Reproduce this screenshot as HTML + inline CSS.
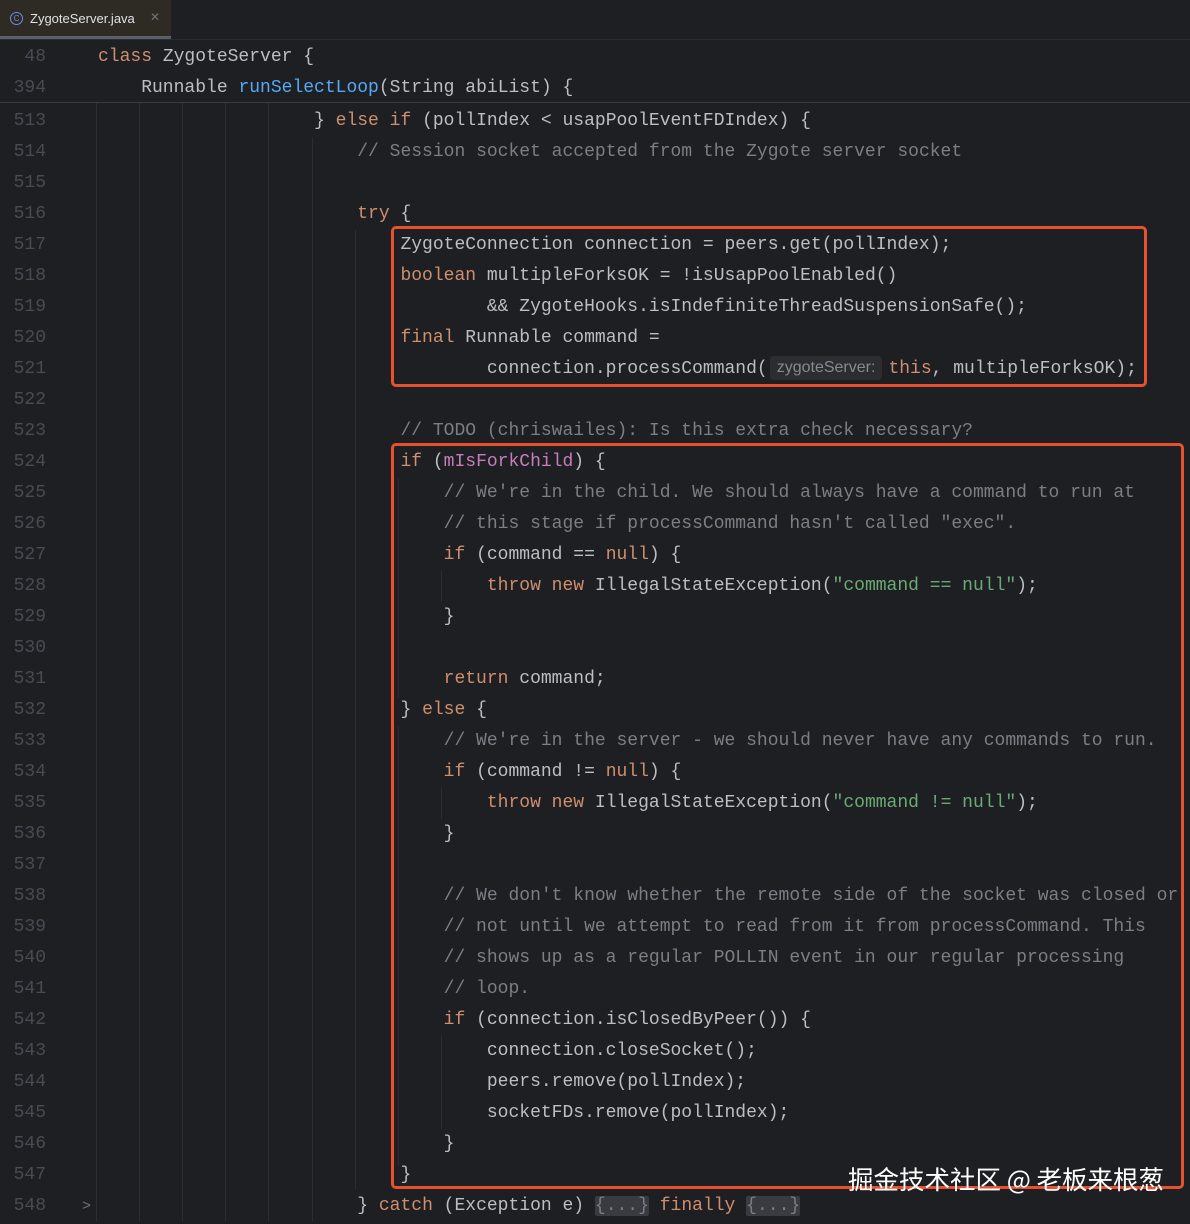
<!DOCTYPE html>
<html><head><meta charset="utf-8"><style>
html,body{margin:0;padding:0}
body{width:1190px;height:1222px;background:#1e1f22;position:relative;overflow:hidden;font-family:"Liberation Mono",monospace;font-size:18px;color:#bcbec4}
.tabbar{position:absolute;left:0;top:0;width:1190px;height:39px;background:#1e1f22;border-bottom:1px solid #2b2d30}
.tab{position:absolute;left:0;top:0;width:171px;height:36px;background:#2e2a24;border-bottom:3px solid #5c5f66;font-family:"Liberation Sans",sans-serif;font-size:13px;color:#dfe1e5}
.tab .ic{position:absolute;left:10px;top:12px;width:11px;height:11px;border:1.5px solid #6e8fe6;border-radius:50%;font-size:8px;line-height:11px;text-align:center;color:#6e8fe6}
.tab .t{position:absolute;left:30px;top:11px}
.tab .x{position:absolute;left:150px;top:10px;color:#6f737a;font-size:12px}
.sticky{position:absolute;left:0;top:40px;width:1190px;height:62px;border-bottom:1px solid #393b40;background:#1e1f22}
.l{position:absolute;left:0;height:31px;line-height:31px;white-space:pre;width:1190px}
.n{position:absolute;left:0;width:46px;text-align:right;color:#474b53}
.code{position:absolute;left:98px}
.k{color:#cf8e6d}.c{color:#7a7e85}.s{color:#6aab73}.p{color:#c77dbb}.f{color:#56a8f5}
.g{background:#393b40;color:#7a7e85;border-radius:2px}
.hint{display:inline-block;background:#2b2d30;color:#868a91;font-family:"Liberation Sans",sans-serif;font-size:16px;line-height:24px;padding:0 7px;border-radius:4px;margin:0 6px 0 2px;vertical-align:1px}
.gd{position:absolute;width:1px;background:#2b2d31}
.box{position:absolute;border:3px solid #e8512f;border-radius:5px}
.wm{position:absolute;left:848px;top:1160px;font-family:"Noto Sans CJK SC",sans-serif;font-size:25.5px;color:#fff;white-space:nowrap}
#m{position:absolute;left:0;top:2px;width:1190px;height:1222px}
</style></head><body>
<div class="tabbar"><div class="tab"><span class="ic">C</span><span class="t">ZygoteServer.java</span><span class="x">✕</span></div></div>

<div class="gd" style="left:96px;top:103px;height:1119px"></div>
<div class="gd" style="left:139px;top:103px;height:1119px"></div>
<div class="gd" style="left:182px;top:103px;height:1119px"></div>
<div class="gd" style="left:225px;top:103px;height:1119px"></div>
<div class="gd" style="left:268px;top:103px;height:1119px"></div>
<div class="gd" style="left:312px;top:137px;height:1085px"></div>
<div class="gd" style="left:355px;top:230px;height:960px"></div>
<div class="gd" style="left:398px;top:478px;height:220px"></div>
<div class="gd" style="left:441px;top:571px;height:31px"></div>
<div class="gd" style="left:398px;top:726px;height:440px"></div>
<div class="gd" style="left:441px;top:788px;height:31px"></div>
<div class="gd" style="left:441px;top:1036px;height:93px"></div>

<div class="sticky">
<div class="l" style="top:2px"><span class="n">48</span><span class="code"><span class="k">class</span> ZygoteServer {</span></div>
<div class="l" style="top:33px"><span class="n">394</span><span class="code">    Runnable <span class="f">runSelectLoop</span>(String abiList) {</span></div>
</div>

<div id="m">
<div class="l" style="top:104px"><span class="n">513</span><span class="code">                    } <span class="k">else if</span> (pollIndex &lt; usapPoolEventFDIndex) {</span></div>
<div class="l" style="top:135px"><span class="n">514</span><span class="code">                        <span class="c">// Session socket accepted from the Zygote server socket</span></span></div>
<div class="l" style="top:166px"><span class="n">515</span></div>
<div class="l" style="top:197px"><span class="n">516</span><span class="code">                        <span class="k">try</span> {</span></div>
<div class="l" style="top:228px"><span class="n">517</span><span class="code">                            ZygoteConnection connection = peers.get(pollIndex);</span></div>
<div class="l" style="top:259px"><span class="n">518</span><span class="code">                            <span class="k">boolean</span> multipleForksOK = !isUsapPoolEnabled()</span></div>
<div class="l" style="top:290px"><span class="n">519</span><span class="code">                                    &amp;&amp; ZygoteHooks.isIndefiniteThreadSuspensionSafe();</span></div>
<div class="l" style="top:321px"><span class="n">520</span><span class="code">                            <span class="k">final</span> Runnable command =</span></div>
<div class="l" style="top:352px"><span class="n">521</span><span class="code">                                    connection.processCommand(<span class="hint">zygoteServer:</span><span class="k">this</span>, multipleForksOK);</span></div>
<div class="l" style="top:383px"><span class="n">522</span></div>
<div class="l" style="top:414px"><span class="n">523</span><span class="code">                            <span class="c">// TODO (chriswailes): Is this extra check necessary?</span></span></div>
<div class="l" style="top:445px"><span class="n">524</span><span class="code">                            <span class="k">if</span> (<span class="p">mIsForkChild</span>) {</span></div>
<div class="l" style="top:476px"><span class="n">525</span><span class="code">                                <span class="c">// We're in the child. We should always have a command to run at</span></span></div>
<div class="l" style="top:507px"><span class="n">526</span><span class="code">                                <span class="c">// this stage if processCommand hasn't called "exec".</span></span></div>
<div class="l" style="top:538px"><span class="n">527</span><span class="code">                                <span class="k">if</span> (command == <span class="k">null</span>) {</span></div>
<div class="l" style="top:569px"><span class="n">528</span><span class="code">                                    <span class="k">throw new</span> IllegalStateException(<span class="s">"command == null"</span>);</span></div>
<div class="l" style="top:600px"><span class="n">529</span><span class="code">                                }</span></div>
<div class="l" style="top:631px"><span class="n">530</span></div>
<div class="l" style="top:662px"><span class="n">531</span><span class="code">                                <span class="k">return</span> command;</span></div>
<div class="l" style="top:693px"><span class="n">532</span><span class="code">                            } <span class="k">else</span> {</span></div>
<div class="l" style="top:724px"><span class="n">533</span><span class="code">                                <span class="c">// We're in the server - we should never have any commands to run.</span></span></div>
<div class="l" style="top:755px"><span class="n">534</span><span class="code">                                <span class="k">if</span> (command != <span class="k">null</span>) {</span></div>
<div class="l" style="top:786px"><span class="n">535</span><span class="code">                                    <span class="k">throw new</span> IllegalStateException(<span class="s">"command != null"</span>);</span></div>
<div class="l" style="top:817px"><span class="n">536</span><span class="code">                                }</span></div>
<div class="l" style="top:848px"><span class="n">537</span></div>
<div class="l" style="top:879px"><span class="n">538</span><span class="code">                                <span class="c">// We don't know whether the remote side of the socket was closed or</span></span></div>
<div class="l" style="top:910px"><span class="n">539</span><span class="code">                                <span class="c">// not until we attempt to read from it from processCommand. This</span></span></div>
<div class="l" style="top:941px"><span class="n">540</span><span class="code">                                <span class="c">// shows up as a regular POLLIN event in our regular processing</span></span></div>
<div class="l" style="top:972px"><span class="n">541</span><span class="code">                                <span class="c">// loop.</span></span></div>
<div class="l" style="top:1003px"><span class="n">542</span><span class="code">                                <span class="k">if</span> (connection.isClosedByPeer()) {</span></div>
<div class="l" style="top:1034px"><span class="n">543</span><span class="code">                                    connection.closeSocket();</span></div>
<div class="l" style="top:1065px"><span class="n">544</span><span class="code">                                    peers.remove(pollIndex);</span></div>
<div class="l" style="top:1096px"><span class="n">545</span><span class="code">                                    socketFDs.remove(pollIndex);</span></div>
<div class="l" style="top:1127px"><span class="n">546</span><span class="code">                                }</span></div>
<div class="l" style="top:1158px"><span class="n">547</span><span class="code">                            }</span></div>
<div class="l" style="top:1189px"><span class="n">548</span><span style="position:absolute;left:82px;color:#6f737a;font-size:15px">&gt;</span><span class="code">                        } <span class="k">catch</span> (Exception e) <span class="g">{...}</span> <span class="k">finally</span> <span class="g">{...}</span></span></div>
</div>

<div class="box" style="left:391px;top:226px;width:750px;height:155px"></div>
<div class="box" style="left:391px;top:443px;width:787px;height:740px"></div>
<div class="wm">掘金技术社区 @ 老板来根葱</div>
</body></html>
